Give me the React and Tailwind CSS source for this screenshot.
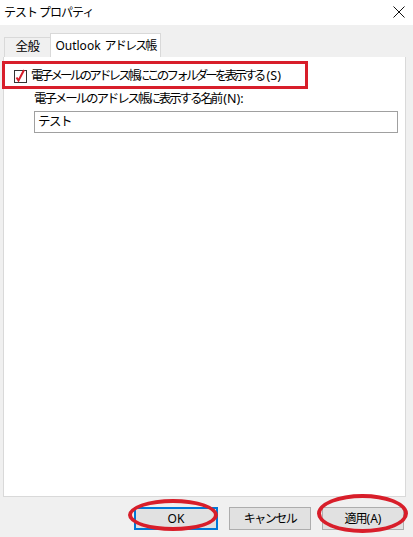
import React from 'react';

const jp = { fontFamily: '"Noto Sans", "Noto Sans CJK JP", sans-serif' };

function App() {
  return (
    <div className="relative w-[413px] h-[537px] bg-[#f0f0f0] text-[#000] overflow-hidden" style={jp}>
      {/* title bar */}
      <div className="h-[25px] bg-white flex items-center justify-between pl-[4px] pr-[8px]">
        <span className="text-[12px] tracking-[-1px]">テスト プロパティ</span>
        <svg width="12" height="12" viewBox="0 0 12 12" className="mb-[1px]">
          <path d="M0.5 0.5 L11.5 11.5 M11.5 0.5 L0.5 11.5" stroke="#111" strokeWidth="1" />
        </svg>
      </div>

      {/* tabs */}
      <div className="flex items-end pl-[4px] mt-[8px] h-[24px]">
        <div className="h-[20px] w-[47px] border border-b-0 border-[#d9d9d9] bg-[#f0f0f0] flex items-center justify-center text-[12.5px] tracking-[-0.5px]">
          全般
        </div>
        <div className="h-[24px] w-[111px] border border-b-0 border-[#d9d9d9] bg-white flex items-center justify-center text-[12px] -ml-px">
          Outlook <span className="tracking-[-1.8px] ml-[4px]">アドレス帳</span>
        </div>
      </div>

      {/* panel */}
      <div className="ml-[3px] w-[403px] h-[440px] border border-t-0 border-[#d9d9d9] bg-white pt-[10px]">
        <div className="flex items-center pl-[10px] h-[18px]">
          <div className="w-[13px] h-[13px] border border-[#333] bg-white relative">
            <svg width="13" height="14" viewBox="0 0 13 14" className="absolute -left-px -top-[2px]">
              <path d="M2.5 8.5 L4.5 11.5 L10 1" stroke="#d81e2a" strokeWidth="2" fill="none" />
            </svg>
          </div>
          <span className="ml-[4px] text-[12.5px]">
            <span className="tracking-[-2.8px]">電子メールのアドレス帳にこのフォルダーを表示する</span>
            <span className="ml-[3px]">(S)</span>
          </span>
        </div>
        <div className="pl-[30px] mt-[6px]">
          <div className="text-[12.5px] leading-[16px]">
            <span className="tracking-[-2.1px]">電子メールのアドレス帳に表示する名前</span>
            <span className="ml-[2px]">(N):</span>
          </div>
          <div className="mt-[4px] w-[364px] h-[22px] border border-[#a0a0a0] flex items-center px-[3px] text-[12.5px] tracking-[-1.5px]">
            テスト
          </div>
        </div>
      </div>

      {/* buttons */}
      <div className="flex justify-end gap-[11px] pr-[9px] mt-[10px]">
        <button className="w-[84px] h-[23px] border-2 border-[#0078d7] bg-[#e1e1e1] text-[12px]">OK</button>
        <button className="w-[82px] h-[23px] border border-[#adadad] bg-[#e1e1e1] text-[12px] tracking-[-1.5px]">キャンセル</button>
        <button className="w-[82px] h-[23px] border border-[#adadad] bg-[#e1e1e1] text-[12px]">
          <span className="tracking-[-1px]">適用</span>(A)
        </button>
      </div>

      {/* annotations */}
      <div className="absolute left-[2px] top-[61px] w-[306px] h-[28px] border-[3px] border-[#d81e2a]" />
      <div className="absolute left-[128px] top-[499px] w-[90px] h-[32px] border-[4px] border-[#d81e2a] rounded-[50%]" />
      <div className="absolute left-[317px] top-[494px] w-[91px] h-[39px] border-[4px] border-[#d81e2a] rounded-[50%]" />
    </div>
  );
}

export default App;
